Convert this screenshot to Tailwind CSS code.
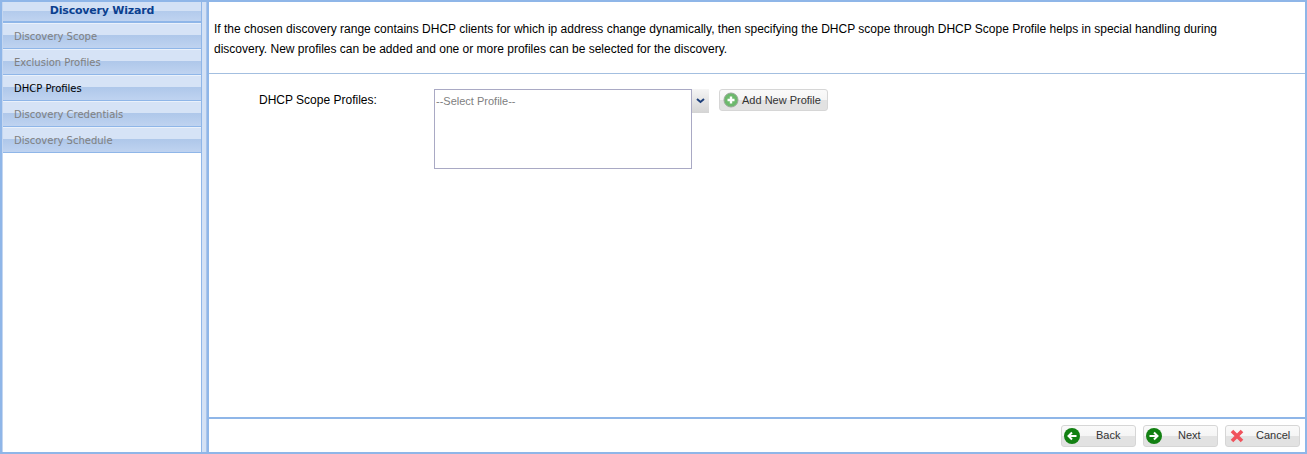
<!DOCTYPE html>
<html lang="en">
<head>
<meta charset="UTF-8" />
<title>Discovery Wizard</title>
<script src="https://cdn.jsdelivr.net/npm/@tailwindcss/browser@4"></script>
</head>
<body class="w-[1307px] h-[454px] overflow-hidden bg-white font-['Liberation_Sans',sans-serif] text-black">
<div class="flex h-full border-t-2 border-b-2 border-l-2 border-[#8fb6e8]">
    <!-- Wizard steps -->
    <div class="w-[200px] shrink-0 border-l border-[#c4d6f0] border-r border-r-[#8fb6e8] bg-white">
        <div class="h-[21px] flex items-center justify-center border-b-2 border-[#8fb6e8] bg-[linear-gradient(#d3e1f5_0,#d3e1f5_45%,#b2caec_45%,#bfd3f0_100%)] font-['DejaVu_Sans',sans-serif] font-bold text-[11px] tracking-[-0.2px] text-[#0b3f8f]">Discovery Wizard</div>
        <div class="h-[26px] flex items-center pl-[11px] border-b border-[#8fb6e8] border-t border-t-[#eaf1fb] bg-[linear-gradient(#d6e3f6_0,#d6e3f6_45%,#aec7ea_45%,#bfd3f0_100%)] font-['DejaVu_Sans',sans-serif] text-[10px] text-[#808080]">Discovery Scope</div>
        <div class="h-[26px] flex items-center pl-[11px] border-b border-[#8fb6e8] border-t border-t-[#eaf1fb] bg-[linear-gradient(#d6e3f6_0,#d6e3f6_45%,#aec7ea_45%,#bfd3f0_100%)] font-['DejaVu_Sans',sans-serif] text-[10px] text-[#808080]">Exclusion Profiles</div>
        <div class="h-[26px] flex items-center pl-[11px] border-b border-[#8fb6e8] border-t border-t-[#eaf1fb] bg-[linear-gradient(#d6e3f6_0,#d6e3f6_45%,#aec7ea_45%,#bfd3f0_100%)] font-['DejaVu_Sans',sans-serif] text-[10px] text-black">DHCP Profiles</div>
        <div class="h-[26px] flex items-center pl-[11px] border-b border-[#8fb6e8] border-t border-t-[#eaf1fb] bg-[linear-gradient(#d6e3f6_0,#d6e3f6_45%,#aec7ea_45%,#bfd3f0_100%)] font-['DejaVu_Sans',sans-serif] text-[10px] text-[#808080]">Discovery Credentials</div>
        <div class="h-[26px] flex items-center pl-[11px] border-b border-[#8fb6e8] border-t border-t-[#eaf1fb] bg-[linear-gradient(#d6e3f6_0,#d6e3f6_45%,#aec7ea_45%,#bfd3f0_100%)] font-['DejaVu_Sans',sans-serif] text-[10px] text-[#808080]">Discovery Schedule</div>
    </div>
    <!-- Splitter -->
    <div class="w-[5px] shrink-0 bg-[#d3e1f5] border-r border-[#a9c4ea]"></div>
    <!-- Main -->
    <div class="flex-1 flex flex-col min-w-0 border-r-2 border-[#8fb6e8] border-l-2 border-l-[#8fb6e8]">
        <div class="h-[72px] shrink-0 pl-[5px] pt-[17px] border-b border-[#a3bfe0] text-[12px] leading-[20px]">
            <p>If the chosen discovery range contains DHCP clients for which ip address change dynamically, then specifying the DHCP scope through DHCP Scope Profile helps in special handling during<br />discovery. New profiles can be added and one or more profiles can be selected for the discovery.</p>
        </div>
        <div class="flex-1 flex items-start pl-[50px] pt-[15px]">
            <label class="w-[175px] pt-[4px] text-[12px] leading-[14px]">DHCP Scope Profiles:</label>
            <div class="w-[258px] h-[80px] border border-[#a9a9c4] pl-px pt-[4px] text-[11px] leading-[14px] text-[#808080]">--Select Profile--</div>
            <div class="w-[17px] h-[24px] flex items-center justify-center bg-[linear-gradient(#f5f5f5,#d4d4d4)]">
                <svg width="9" height="6" viewBox="0 0 9 6"><path d="M1 1l3.5 3L8 1" fill="none" stroke="#1d3f7a" stroke-width="2" /></svg>
            </div>
            <button class="ml-[10px] w-[109px] h-[22px] flex items-center pl-[3px] gap-[3px] border border-[#d6d6d6] rounded-[3px] bg-[linear-gradient(#fafafa_0,#f5f5f5_50%,#e2e2e2_50%,#e2e2e2_100%)] text-[11px] text-[#333]">
                <svg width="16" height="16" viewBox="0 0 16 16"><circle cx="8" cy="8" r="7" fill="#6cb96c" stroke="#9aa89a" /><path d="M8 4.5v7M4.5 8h7" stroke="#fff" stroke-width="2.4" /></svg>
                Add New Profile
            </button>
        </div>
        <div class="h-[35px] shrink-0 border-t-2 border-[#8fb6e8] flex items-center justify-end gap-[7px] pr-[5px]">
            <button class="w-[75px] h-[22px] flex items-center pl-[2px] border border-[#d6d6d6] rounded-[3px] bg-[linear-gradient(#fafafa_0,#f5f5f5_50%,#e2e2e2_50%,#e2e2e2_100%)] text-[11px] text-[#333]">
                <svg width="16" height="16" viewBox="0 0 16 16"><circle cx="8" cy="8" r="8" fill="#128012" /><path d="M12.5 8H5M8 4.5L4.5 8 8 11.5" fill="none" stroke="#fff" stroke-width="2" /></svg>
                <span class="ml-[16px]">Back</span>
            </button>
            <button class="w-[75px] h-[22px] flex items-center pl-[2px] border border-[#d6d6d6] rounded-[3px] bg-[linear-gradient(#fafafa_0,#f5f5f5_50%,#e2e2e2_50%,#e2e2e2_100%)] text-[11px] text-[#333]">
                <svg width="16" height="16" viewBox="0 0 16 16"><circle cx="8" cy="8" r="8" fill="#128012" /><path d="M3.5 8H11M8 4.5L11.5 8 8 11.5" fill="none" stroke="#fff" stroke-width="2" /></svg>
                <span class="ml-[16px]">Next</span>
            </button>
            <button class="w-[75px] h-[22px] flex items-center pl-[4px] border border-[#d6d6d6] rounded-[3px] bg-[linear-gradient(#fafafa_0,#f5f5f5_50%,#e2e2e2_50%,#e2e2e2_100%)] text-[11px] text-[#333]">
                <svg width="14" height="14" viewBox="0 0 14 14"><path d="M2 2l10 10M12 2L2 12" stroke="#f0525c" stroke-width="3.6" /></svg>
                <span class="ml-[12px]">Cancel</span>
            </button>
        </div>
    </div>
</div>
</body>
</html>
